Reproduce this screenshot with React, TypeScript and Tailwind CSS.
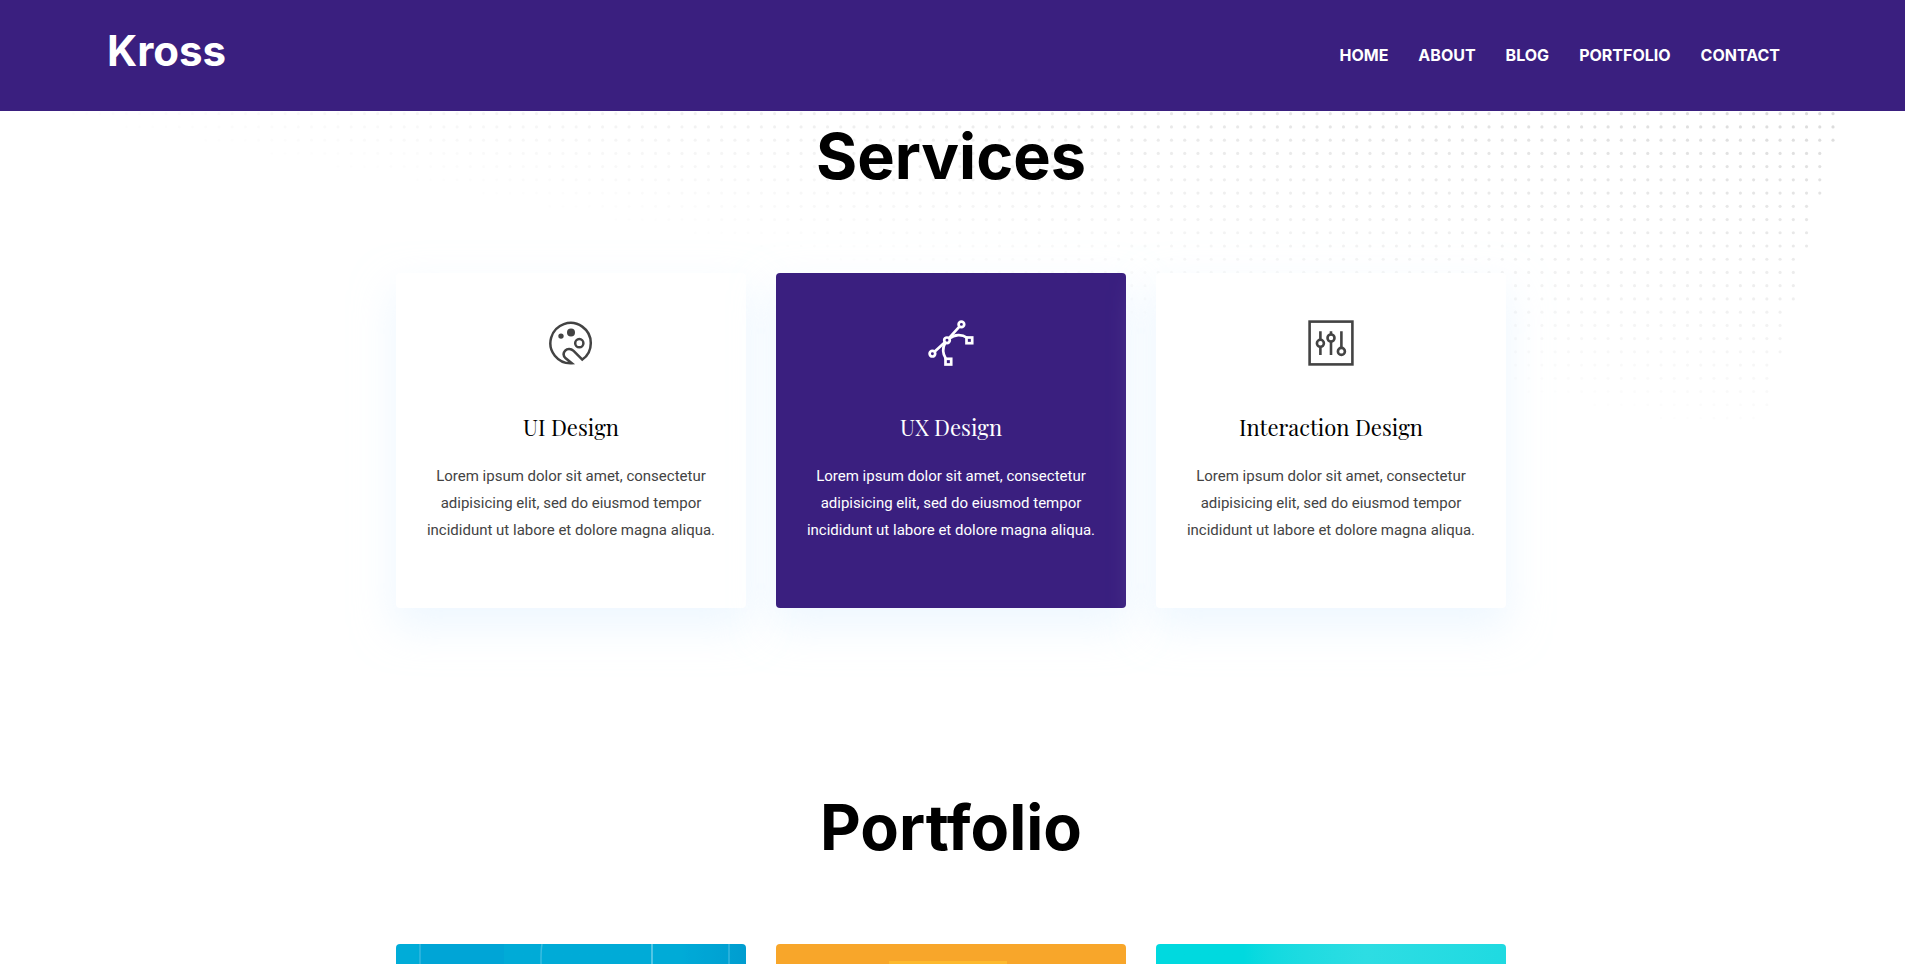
import React from "react";

const navItems = ["Home", "About", "Blog", "Portfolio", "Contact"];

const DOT_STEP = 13.23;

function DotPattern() {
  const dots: { x: number; y: number; a: number }[] = [];
  for (let row = 0; row < 24; row++) {
    const y = 2.7 + row * DOT_STEP;
    const last = Math.floor((row + 1) / 4);
    for (let col = last; col < 134; col++) {
      const x = 1833 - col * DOT_STEP;
      const depth = x * 0.19 - y - 8;
      if (depth > 0) dots.push({ x, y, a: Math.min(0.14, 0.006 + depth * 0.0004) });
    }
  }
  return (
    <svg
      aria-hidden="true"
      className="pointer-events-none absolute top-0 right-0"
      width="1905"
      height="330"
      viewBox="0 0 1905 330"
    >
      {dots.map((d, i) => (
        <circle key={i} cx={d.x} cy={d.y} r="1.6" fill="#000" fillOpacity={d.a} />
      ))}
    </svg>
  );
}

function PaletteIcon() {
  return (
    <svg width="48" height="48" viewBox="0 0 48 48" fill="none" stroke="currentColor" strokeWidth="2.5" aria-hidden="true">
      <path d="M24.8 44.3A20.2 20.2 0 1 1 35.3 40.6L26.6 31.9C23.9 29.4 20.3 29.3 18.2 31.6C16 34 16.4 37 18.7 39.3L24.8 44.3Z" />
      <circle cx="32.3" cy="24.2" r="4.1" />
      <circle cx="24" cy="13.4" r="4" fill="currentColor" stroke="none" />
      <circle cx="14" cy="17.1" r="2.7" fill="currentColor" stroke="none" />
    </svg>
  );
}

function VectorIcon() {
  return (
    <svg width="48" height="48" viewBox="0 0 48 48" fill="none" stroke="currentColor" strokeWidth="2.7" aria-hidden="true">
      <circle cx="34.4" cy="5.4" r="2.8" />
      <circle cx="20" cy="21.3" r="2.8" />
      <circle cx="5.4" cy="34.7" r="2.8" />
      <path d="M32.4 7.6L22 19.2M17.9 23.2L7.5 32.7" />
      <path d="M22.4 19.6C27.5 15.2 35 15 40 18.8M18.2 23.8C15.4 29 15.6 34.5 18.8 39.6" />
      <rect x="39.5" y="18.5" width="5.7" height="5.7" />
      <rect x="18.5" y="39.8" width="5.7" height="5.7" />
    </svg>
  );
}

function SlidersIcon() {
  return (
    <svg width="48" height="48" viewBox="0 0 48 48" fill="none" stroke="currentColor" strokeWidth="2.6" aria-hidden="true">
      <rect x="2.6" y="2.6" width="42.8" height="42.8" />
      <path d="M13.4 12.3V20.8M13.4 28V36M24 12.3V15.4M24 22.6V36M34.4 12.3V28.8" />
      <circle cx="13.4" cy="24.3" r="3.5" />
      <circle cx="24" cy="19" r="3.5" />
      <circle cx="34.4" cy="32.4" r="3.5" />
    </svg>
  );
}

const services = [
  { title: "UI Design", Icon: PaletteIcon, active: false },
  { title: "UX Design", Icon: VectorIcon, active: true },
  { title: "Interaction Design", Icon: SlidersIcon, active: false },
];

function SectionTitle({ children }: { children: React.ReactNode }) {
  return (
    <h2 className="text-center font-['Inter',sans-serif] text-[63px] leading-[80px] font-bold text-black">
      {children}
    </h2>
  );
}

export default function App() {
  return (
    <div className="flex h-screen flex-col overflow-hidden bg-white">
      <header className="flex h-[111px] shrink-0 items-center justify-between bg-[#3a1f7f] pr-[125px] pl-[107px] font-['Inter',sans-serif] text-white">
        <a href="#home" className="pb-2.5 text-[42px] leading-[52px] font-bold">
          Kross
        </a>
        <nav className="pb-0.5">
          <ul className="flex gap-[30px] text-base font-bold uppercase">
            {navItems.map((item) => (
              <li key={item}>
                <a href={`#${item.toLowerCase()}`}>{item}</a>
              </li>
            ))}
          </ul>
        </nav>
      </header>

      <main className="relative flex-1 pr-[3px]">
        <DotPattern />
        <div className="relative mx-auto max-w-[1110px]">
          <section id="services" className="pt-[5px]">
            <SectionTitle>Services</SectionTitle>
            <div className="mt-[77px] grid grid-cols-3 gap-[30px]">
              {services.map(({ title, Icon, active }) => (
                <article
                  key={title}
                  className={`flex flex-col items-center rounded px-5 pt-[46px] pb-16 text-center shadow-[0_18px_40px_2px_rgba(224,241,255,0.55)] ${
                    active ? "bg-[#3a1f7f] text-white" : "bg-white text-[#434343]"
                  }`}
                >
                  <Icon />
                  <h3
                    className={`mt-11 font-['Playfair_Display','Liberation_Serif',serif] text-[22px] leading-8 ${
                      active ? "text-white" : "text-black"
                    }`}
                  >
                    {title}
                  </h3>
                  <p className="mt-5 font-['Roboto',sans-serif] text-[15px] leading-[27px]">
                    Lorem ipsum dolor sit amet, consectetur adipisicing elit, sed do eiusmod tempor incididunt ut
                    labore et dolore magna aliqua.
                  </p>
                </article>
              ))}
            </div>
          </section>

          <section id="portfolio" className="pt-[179px]">
            <SectionTitle>Portfolio</SectionTitle>
            <div className="mt-[77px] grid grid-cols-3 gap-[30px]">
              <div className="h-[300px] overflow-hidden rounded bg-linear-to-r from-[#00acd8] from-80% to-[#009dd0]">
                <svg width="350" height="300" viewBox="0 0 350 300" aria-hidden="true">
                  <rect x="24" width="84" height="300" fill="#00a0d3" opacity="0.5" />
                  <path d="M24 0V300M333 0V300" stroke="#4dbfe3" strokeWidth="1.5" opacity="0.7" />
                  <path d="M146 0Q144 10 146 40V300" stroke="#39bde1" strokeWidth="1.5" fill="none" />
                  <path d="M256 0V300" stroke="#6bcfea" strokeWidth="1.5" />
                </svg>
              </div>
              <div className="h-[300px] overflow-hidden rounded bg-[#f8a62a]">
                <svg width="350" height="300" viewBox="0 0 350 300" aria-hidden="true">
                  <rect x="113" y="17" width="118" height="283" fill="#fdb92e" />
                </svg>
              </div>
              <div className="h-[300px] rounded bg-linear-to-r from-[#00d9df] from-25% via-[#2ddde3] via-60% to-[#1fdae1]" />
            </div>
          </section>
        </div>
      </main>
    </div>
  );
}
